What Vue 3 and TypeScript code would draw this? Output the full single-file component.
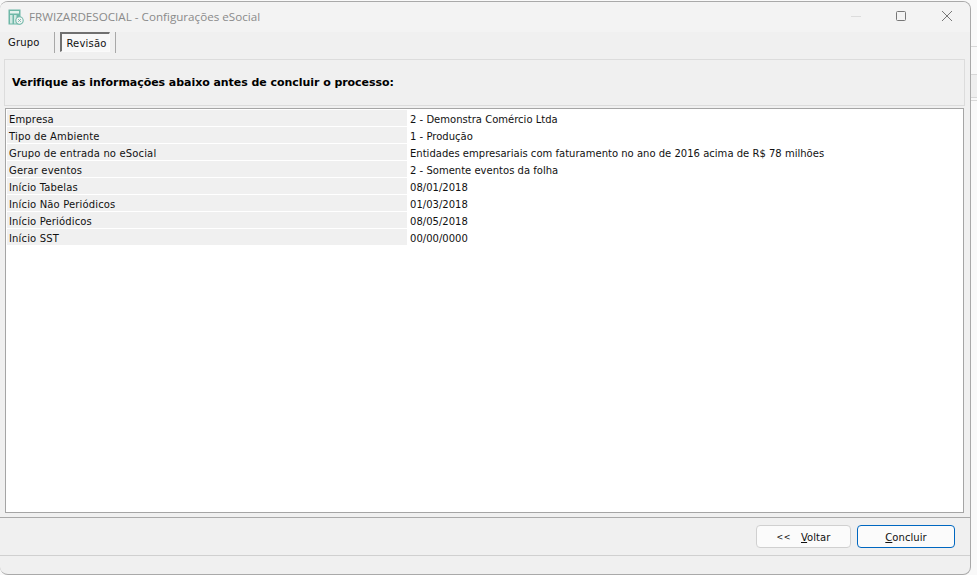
<script setup lang="ts">
const rows: [string, string][] = [
  ['Empresa', '2 - Demonstra Comércio Ltda'],
  ['Tipo de Ambiente', '1 - Produção'],
  ['Grupo de entrada no eSocial', 'Entidades empresariais com faturamento no ano de 2016 acima de R$ 78 milhões'],
  ['Gerar eventos', '2 - Somente eventos da folha'],
  ['Início Tabelas', '08/01/2018'],
  ['Início Não Periódicos', '01/03/2018'],
  ['Início Periódicos', '08/05/2018'],
  ['Início SST', '00/00/0000'],
]
</script>

<template>
  <div class="desktop">
    <div class="window">
      <header class="titlebar">
        <svg class="appicon" width="16" height="16" viewBox="0 0 16 16">
          <rect x="0.5" y="0.5" width="12" height="15" fill="#6fb8a8" />
          <rect x="2" y="2" width="9" height="2.5" fill="#e4f2ee" />
          <rect x="2" y="6" width="2.5" height="8.5" fill="#d2e9e3" />
          <rect x="6" y="6" width="2.5" height="8.5" fill="#d2e9e3" />
          <circle cx="11.5" cy="11.5" r="3.7" fill="#f3f3f3" stroke="#6fb8a8" stroke-width="1.1" />
          <path d="M10.2 10.2l2.6 2.6M12.8 10.2l-2.6 2.6" stroke="#6fb8a8" stroke-width="1" />
        </svg>
        <span class="title">FRWIZARDESOCIAL - Configurações eSocial</span>
        <div class="controls">
          <svg width="46" height="30" viewBox="0 0 46 30"><path d="M19 14.5h10" stroke="#dcdcdc" /></svg>
          <svg width="46" height="30" viewBox="0 0 46 30"><rect x="18.5" y="9.5" width="9" height="9" rx="1" fill="none" stroke="#777" /></svg>
          <svg width="46" height="30" viewBox="0 0 46 30"><path d="M18 9l10 10M28 9L18 19" stroke="#777" fill="none" /></svg>
        </div>
      </header>
      <nav class="tabs">
        <span class="tab">Grupo</span>
        <i class="sep"></i>
        <span class="tab active">Revisão</span>
        <i class="sep"></i>
      </nav>
      <div class="heading"><h1>Verifique as informações abaixo antes de concluir o processo:</h1></div>
      <div class="list">
        <div v-for="r in rows" :key="r[0]" class="row">
          <span class="label">{{ r[0] }}</span>
          <span class="value">{{ r[1] }}</span>
        </div>
      </div>
      <footer class="footer">
        <button class="btn" type="button"><span class="arrows">&lt;&lt;</span><span><u>V</u>oltar</span></button>
        <button class="btn primary" type="button"><span><u>C</u>oncluir</span></button>
      </footer>
      <div class="status"></div>
    </div>
    <div class="behind">
      <i class="line one"></i>
      <i class="band"></i>
      <i class="line"></i>
    </div>
  </div>
</template>

<style scoped>
.desktop {
  width: 977px;
  height: 575px;
  background: #f9f9f9;
  overflow: hidden;
  display: flex;
  font-family: "DejaVu Sans", sans-serif;
  font-size: 10px;
  color: #111;
}
.window {
  width: 971px;
  height: 574px;
  flex: none;
  margin-top: 1px;
  box-sizing: border-box;
  border: 1px solid #a9a9a9;
  border-left: 0;
  border-radius: 8px;
  background: #f0f0f0;
  display: flex;
  flex-direction: column;
  overflow: hidden;
}
.titlebar {
  height: 30px;
  flex: none;
  background: #f3f3f3;
  display: flex;
  align-items: center;
  padding-left: 8px;
}
.appicon { margin-right: 5px; margin-top: 0; }
.title { color: #8a8a8a; font-size: 11.65px; font-family: "Open Sans", sans-serif; padding-bottom: 2px; }
.controls { margin-left: auto; display: flex; }
.tabs {
  height: 27px;
  flex: none;
  display: flex;
  align-items: flex-start;
  box-sizing: border-box;
}
.tab {
  width: 54px;
  box-sizing: border-box;
  padding: 1px 0 0 8px;
  line-height: 20px;
  letter-spacing: 0.2px;
}
.sep { width: 1px; height: 21px; background: #a8a8a8; }
.tab.active {
  margin: 0 5px;
  width: 50px;
  height: 20px;
  line-height: 20px;
  padding: 0 0 0 2px;
  text-align: center;
  box-sizing: border-box;
  border: 1px solid #707070;
  border-width: 2px 1px 1px 2px;
  border-right-color: #fafafa;
  border-bottom-color: #fafafa;
  background: #f8f8f8;
}
.heading {
  flex: none;
  height: 47px;
  margin: 0 5px 0 4px;
  box-sizing: border-box;
  border: 1px solid #dcdcdc;
  display: flex;
  align-items: center;
  padding-left: 7px;
}
h1 { margin: 0; font-size: 11px; font-weight: 700; color: #000; letter-spacing: -0.05px; }
.list {
  flex: none;
  height: 405px;
  margin: 2px 6px 0 5px;
  box-sizing: border-box;
  border: 1px solid #a5a5a5;
  background: #fff;
  padding-top: 1px;
  display: flex;
  flex-direction: column;
}
.row { display: flex; height: 17px; flex: none; }
.label {
  width: 400px;
  margin-left: 1px;
  background: #f0f0f0;
  padding: 2px 0 0 2px;
  line-height: 16px;
  height: 16px;
  box-sizing: border-box;
  letter-spacing: 0.15px;
}
.value { padding: 2px 0 0 3px; line-height: 16px; letter-spacing: 0.015px; }
.footer {
  flex: none;
  height: 38px;
  margin-top: 4px;
  border-top: 1px solid #a9a9a9;
  box-sizing: border-box;
  display: flex;
  justify-content: flex-end;
  align-items: center;
  gap: 6px;
  padding-right: 15px;
}
.btn {
  width: 95px;
  height: 23px;
  border: 1px solid #d0d0d0;
  border-radius: 4px;
  background: #fbfbfb;
  font: inherit;
  color: #111;
  display: flex;
  align-items: center;
  justify-content: center;
  gap: 10px;
  padding: 2px 0 0;
  letter-spacing: 0.05px;
}
.arrows { font-size: 8px; letter-spacing: 0.5px; }
.btn.primary { width: 98px; border: 1px solid #0067c0; }
.status { flex: 1; border-top: 1px solid #d0d0d0; }
.behind { flex: 1; display: flex; flex-direction: column; padding-top: 46px; }
.line { display: block; height: 1px; background: #d8d8d8; }
.band { display: block; height: 22px; margin-top: 27px; background: #efefef; border-top: 1px solid #d8d8d8; border-bottom: 1px solid #d8d8d8; }
.band + .line { margin-top: 2px; }
</style>
